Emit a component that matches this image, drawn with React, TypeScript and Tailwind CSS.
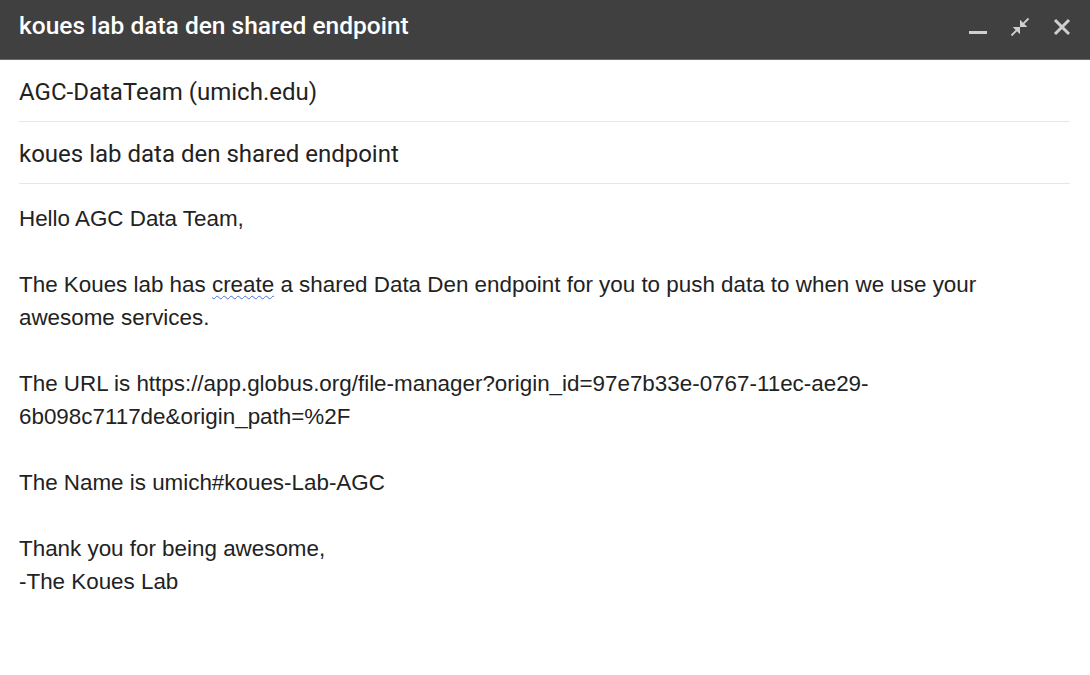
const Header = () => {
  return (
    <div className="h-[60px] bg-[#404040] border-b border-[#6b6b6b] flex items-center justify-between pl-[19px] pr-[17px]">
      <span className="text-[24.5px] font-medium text-white -mt-[6px] font-['Roboto',sans-serif]">
        koues lab data den shared endpoint
      </span>
      <div className="flex items-center gap-[20px] -mt-[6px] text-[#cfcfcf]">
        {/* minimize */}
        <svg width="22" height="22" viewBox="0 0 22 22">
          <rect x="2" y="15" width="18" height="3" fill="currentColor" />
        </svg>
        {/* exit full screen */}
        <svg width="22" height="22" viewBox="0 0 24 24">
          <path
            fill="currentColor"
            d="M22 3.41L16.71 8.7 20 12h-8V4l3.29 3.29L20.59 2 22 3.41zM3.41 22l5.29-5.29L12 20v-8H4l3.29 3.29L2 20.59 3.41 22z"
          />
        </svg>
        {/* close */}
        <svg width="22" height="22" viewBox="0 0 22 22">
          <path
            d="M4 4 L18 18 M18 4 L4 18"
            stroke="currentColor"
            strokeWidth="3"
            fill="none"
          />
        </svg>
      </div>
    </div>
  );
};

const Field = ({ children }: { children: React.ReactNode }) => {
  return (
    <div className="h-[62px] border-b border-[#e6e6e6] flex items-center pt-[3px]">
      <span className="text-[24px] text-[#222] font-['Roboto',sans-serif]">
        {children}
      </span>
    </div>
  );
};

export default function App() {
  return (
    <div className="w-[1090px] h-[675px] bg-white overflow-hidden">
      <Header />
      <div className="pl-[19px] pr-[20px]">
        <Field>AGC-DataTeam (umich.edu)</Field>
        <Field>koues lab data den shared endpoint</Field>
      </div>
      <div className="pl-[19px] pr-[20px] pt-[18px] text-[22.4px] leading-[33px] text-[#222] font-['Liberation_Sans',Arial,sans-serif]">
        <p>Hello AGC Data Team,</p>
        <p>&nbsp;</p>
        <p>
          The Koues lab has{" "}
          <span className="underline decoration-wavy decoration-[#4a74d6] decoration-1 underline-offset-[3px]">
            create
          </span>{" "}
          a shared Data Den endpoint for you to push data to when we use your
          <br />
          awesome services.
        </p>
        <p>&nbsp;</p>
        <p>
          The URL is
          https://app.globus.org/file-manager?origin_id=97e7b33e-0767-11ec-ae29-
          <br />
          6b098c7117de&amp;origin_path=%2F
        </p>
        <p>&nbsp;</p>
        <p>The Name is umich#koues-Lab-AGC</p>
        <p>&nbsp;</p>
        <p>Thank you for being awesome,</p>
        <p>-The Koues Lab</p>
      </div>
    </div>
  );
}
